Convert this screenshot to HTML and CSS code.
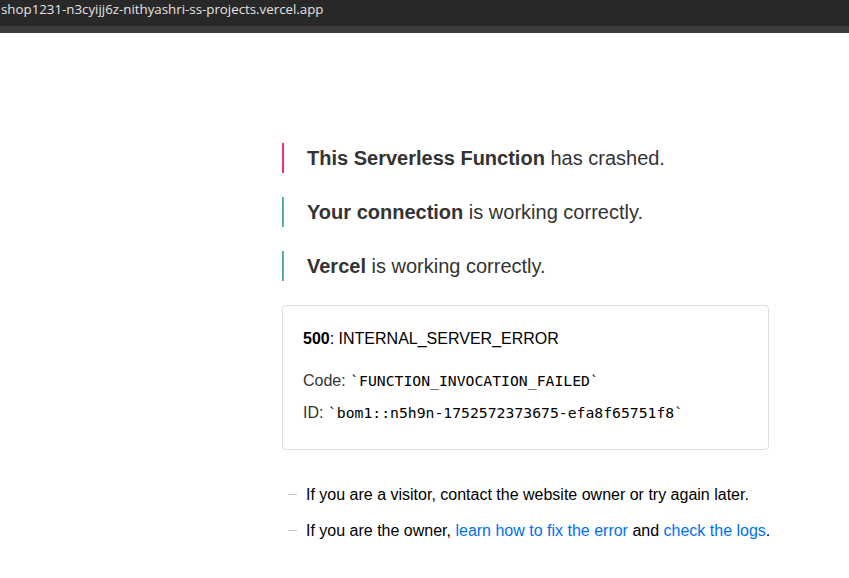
FILE: index.html
```html
<!DOCTYPE html>
<html>
<head>
<meta charset="utf-8">
<link rel="stylesheet" href="styles.css">
</head>
<body>
<div class="urlbar"><span class="url">shop1231-n3cyijj6z-nithyashri-ss-projects.vercel.app</span></div>
<div class="strip"></div>
<main class="main">
  <p class="status status-error"><strong>This Serverless Function</strong> has crashed.</p>
  <p class="status status-ok"><strong>Your connection</strong> is working correctly.</p>
  <p class="status status-ok"><strong>Vercel</strong> is working correctly.</p>
  <div class="card">
    <p class="card-title"><strong>500</strong>: INTERNAL_SERVER_ERROR</p>
    <p class="card-line">Code: <code class="mono">`FUNCTION_INVOCATION_FAILED`</code></p>
    <p class="card-line">ID: <code class="mono">`bom1::n5h9n-1752572373675-efa8f65751f8`</code></p>
  </div>
  <ul class="help">
    <li>If you are a visitor, contact the website owner or try again later.</li>
    <li>If you are the owner, <a class="link" href="#">learn how to fix the error</a> and <a class="link" href="#">check the logs</a>.</li>
  </ul>
</main>
</body>
</html>
```
FILE: styles.css
```css
html, body { margin: 0; padding: 0; background: #fff; }
body { font-family: "Liberation Sans", Arial, sans-serif; color: #333; }
.urlbar { height: 26px; background: #282828; display: flex; align-items: center; overflow: hidden; }
.url { font-family: "Open Sans", "Noto Sans", sans-serif; font-size: 13.3px; color: #e4e4e4; padding-left: 1px; white-space: nowrap; margin-top: -8px; }
.strip { height: 7px; background: #3b3b3b; }
.main { margin-left: 282px; width: 487px; padding-top: 110px; }
.status { margin: 0 0 24px 0; padding-left: 23px; border-left: 2px solid #50b59a; font-size: 20px; line-height: 30px; }
.status-error { border-left-color: #e8336f; }
.status strong { color: #333; }
.card { margin-top: 24px; border: 1px solid #ddd; border-radius: 4px; padding: 21px 20px 26px 20px; }
.card p { margin: 0; }
.card-title { font-size: 16px; color: #000; line-height: 24px; margin-bottom: 20px !important; }
.card-line { font-size: 16px; color: #333; line-height: 20px; margin-bottom: 12px !important; }
.card-line:last-child { margin-bottom: 0 !important; }
.mono { font-family: "DejaVu Sans Mono", monospace; font-size: 14.75px; color: #000; }
.help { list-style: none; margin: 35px 0 0 0; padding: 0 0 0 6px; }
.help li { position: relative; padding-left: 18px; font-size: 16px; color: #000; line-height: 20px; margin-bottom: 16px; white-space: nowrap; }
.help li::before { content: ""; position: absolute; left: 0; top: 9px; width: 9px; height: 1px; background: #c4c4c4; }
.link { color: #0070f3; text-decoration: none; }
```
